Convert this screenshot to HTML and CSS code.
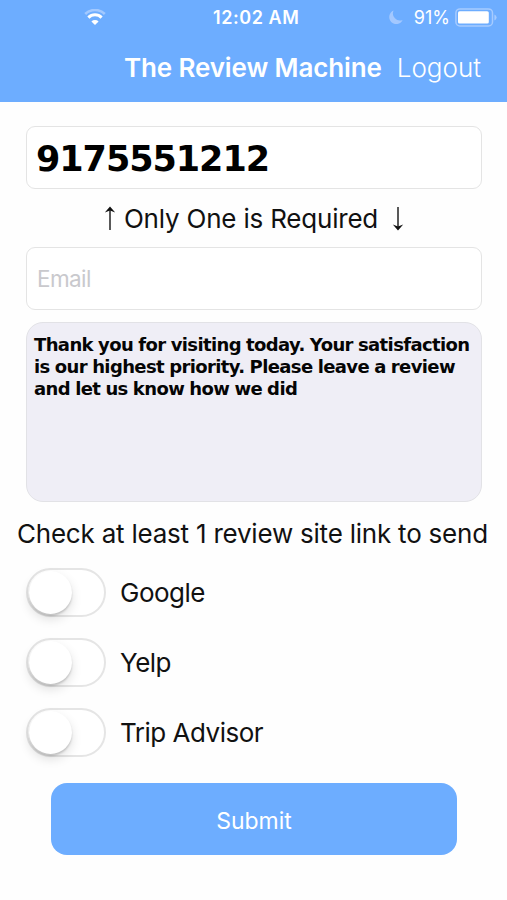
FILE: index.html
```
<!DOCTYPE html>
<html lang="en">
<head>
  <meta charset="UTF-8" />
  <meta name="viewport" content="width=device-width, initial-scale=1.0"/>
  <title>The Review Machine</title>
  <link rel="stylesheet" href="styles.css">
</head>
<body>
  <header class="header">
    <div class="status">
      <svg class="wifi" width="22" height="17" viewBox="0 0 22 17">
        <path d="M1.2 5 A14 14 0 0 1 20.8 5" fill="none" stroke="#a3c9ff" stroke-width="2.6"/>
        <path d="M4.4 8.6 A9.3 9.3 0 0 1 17.6 8.6" fill="none" stroke="#fff" stroke-width="3"/>
        <path d="M7.4 12.4 A5.2 5.2 0 0 1 14.6 12.4 L11 16 Z" fill="#fff"/>
      </svg>
      <span class="time">12:02 AM</span>
      <div class="status-right">
        <svg class="moon" width="14" height="15" viewBox="0 0 14 15">
          <path d="M4.6 0.6 A7 7 0 1 0 13.6 10 A7 7 0 0 1 4.6 0.6 Z" fill="#a3c8ff"/>
        </svg>
        <span class="percent">91%</span>
        <svg class="battery" width="43" height="19" viewBox="0 0 43 19">
          <rect x="0.9" y="0.9" width="36.6" height="17" rx="4" fill="none" stroke="#a6cbff" stroke-width="1.5"/>
          <rect x="3" y="3.2" width="30.8" height="12.4" rx="1.6" fill="#fff"/>
          <path d="M39.4 6.4 Q41.6 7.2 41.6 9.4 Q41.6 11.6 39.4 12.4 Z" fill="#a6cbff"/>
        </svg>
      </div>
    </div>
    <div class="navbar">
      <h1 class="title">The Review Machine</h1>
      <a class="logout">Logout</a>
    </div>
  </header>

  <form class="form">
    <input class="field phone" type="text" value="9175551212">
    <div class="hint">
      <svg width="12" height="26" viewBox="0 0 12 26">
        <path d="M6 3 V25" stroke="#222" stroke-width="1.5"/>
        <path d="M6 1.4 L11.2 7.6 L6 5.6 L0.8 7.6 Z" fill="#111"/>
      </svg>
      <span class="hint-text">Only One is Required</span>
      <svg width="12" height="26" viewBox="0 0 12 26">
        <path d="M6 2 V24" stroke="#222" stroke-width="1.5"/>
        <path d="M6 25.6 L11.2 19.4 L6 21.4 L0.8 19.4 Z" fill="#111"/>
      </svg>
    </div>
    <input class="field email" type="text" placeholder="Email">
    <div class="message">Thank you for visiting today. Your satisfaction<br>is our highest priority. Please leave a review<br>and let us know how we did</div>
    <p class="check">Check at least 1 review site link to send</p>

    <div class="sites">
      <label class="site"><span class="switch"><span class="knob"></span></span><span>Google</span></label>
      <label class="site"><span class="switch"><span class="knob"></span></span><span>Yelp</span></label>
      <label class="site"><span class="switch"><span class="knob"></span></span><span>Trip Advisor</span></label>
    </div>

    <button class="submit" type="button">Submit</button>
  </form>
</body>
</html>
```
FILE: styles.css
```
* {
  margin: 0;
  padding: 0;
  box-sizing: border-box;
}
body {
  background-color: #fefefe;
  font-family: Inter, "Liberation Sans", sans-serif;
  font-size: 26px;
  color: #111;
}

.header {
  height: 102px;
  background-color: #6dadff;
  color: #fff;
}

.status {
  display: flex;
  align-items: center;
  height: 34px;
  padding: 0 9px 0 84px;
}

.time {
  margin-left: 107px;
  font-size: 18px;
  font-weight: 600;
  letter-spacing: 0.55px;
}

.status-right {
  display: flex;
  align-items: center;
  margin-left: auto;
}

.percent {
  margin: 0 5px 0 11px;
  font-size: 18px;
}

.navbar {
  display: flex;
  align-items: center;
  justify-content: flex-end;
  gap: 15px;
  height: 67px;
  padding-right: 26px;
}

.title {
  font-size: 26px;
  font-weight: 600;
  letter-spacing: -0.12px;
}

.logout {
  font-weight: 350;
}

.form {
  display: flex;
  flex-direction: column;
  padding: 24px 25px 0 26px;
}

.field {
  width: 100%;
  height: 63px;
  padding: 0 10px;
  border: 1.5px solid #e4e4e4;
  border-radius: 9px;
  background: #fff;
  outline: none;
}

.phone {
  padding: 3px 9px 0;
  font-family: "DejaVu Sans", sans-serif;
  font-size: 35px;
  font-weight: bold;
  letter-spacing: -1.05px;
  color: #000;
}

.email {
  font-family: Inter, sans-serif;
  font-size: 22.5px;
  letter-spacing: -0.6px;
}

.email::placeholder {
  color: #c9c9cd;
}

.hint {
  display: flex;
  align-items: center;
  justify-content: center;
  height: 58px;
}

.hint-text {
  margin: 0 14px 0 8px;
  letter-spacing: -0.2px;
}

.message {
  height: 180px;
  margin-top: 12px;
  padding: 11px 7px;
  border: 1.5px solid #e2e2e6;
  border-radius: 17px;
  background-color: #efeef6;
  font-family: "DejaVu Sans", sans-serif;
  font-size: 18px;
  font-weight: bold;
  letter-spacing: -0.62px;
  word-spacing: -0.5px;
  line-height: 22px;
  white-space: nowrap;
  color: #050505;
}

.check {
  height: 66px;
  margin: 0 -20px 0 -9px;
  line-height: 64px;
  letter-spacing: -0.22px;
  white-space: nowrap;
}

.sites {
  display: flex;
  flex-direction: column;
  gap: 21px;
}

.site {
  display: flex;
  align-items: center;
  gap: 14px;
  height: 49px;
  letter-spacing: -0.5px;
}

.switch {
  width: 80px;
  height: 49px;
  padding: 1px 0 0 1px;
  border: 2.5px solid #e5e5e5;
  border-radius: 25px;
  background: #fff;
}

.knob {
  display: block;
  width: 43px;
  height: 43px;
  border-radius: 50%;
  background: #fff;
  box-shadow: 0 5px 11px rgba(0, 0, 0, 0.13), 0 2px 2px rgba(0, 0, 0, 0.16);
}

.submit {
  height: 72px;
  margin: 26px 25px 0;
  padding-top: 3px;
  border: none;
  border-radius: 16px;
  background-color: #6dadff;
  font-family: Inter, sans-serif;
  font-size: 23px;
  color: #fff;
}
```
